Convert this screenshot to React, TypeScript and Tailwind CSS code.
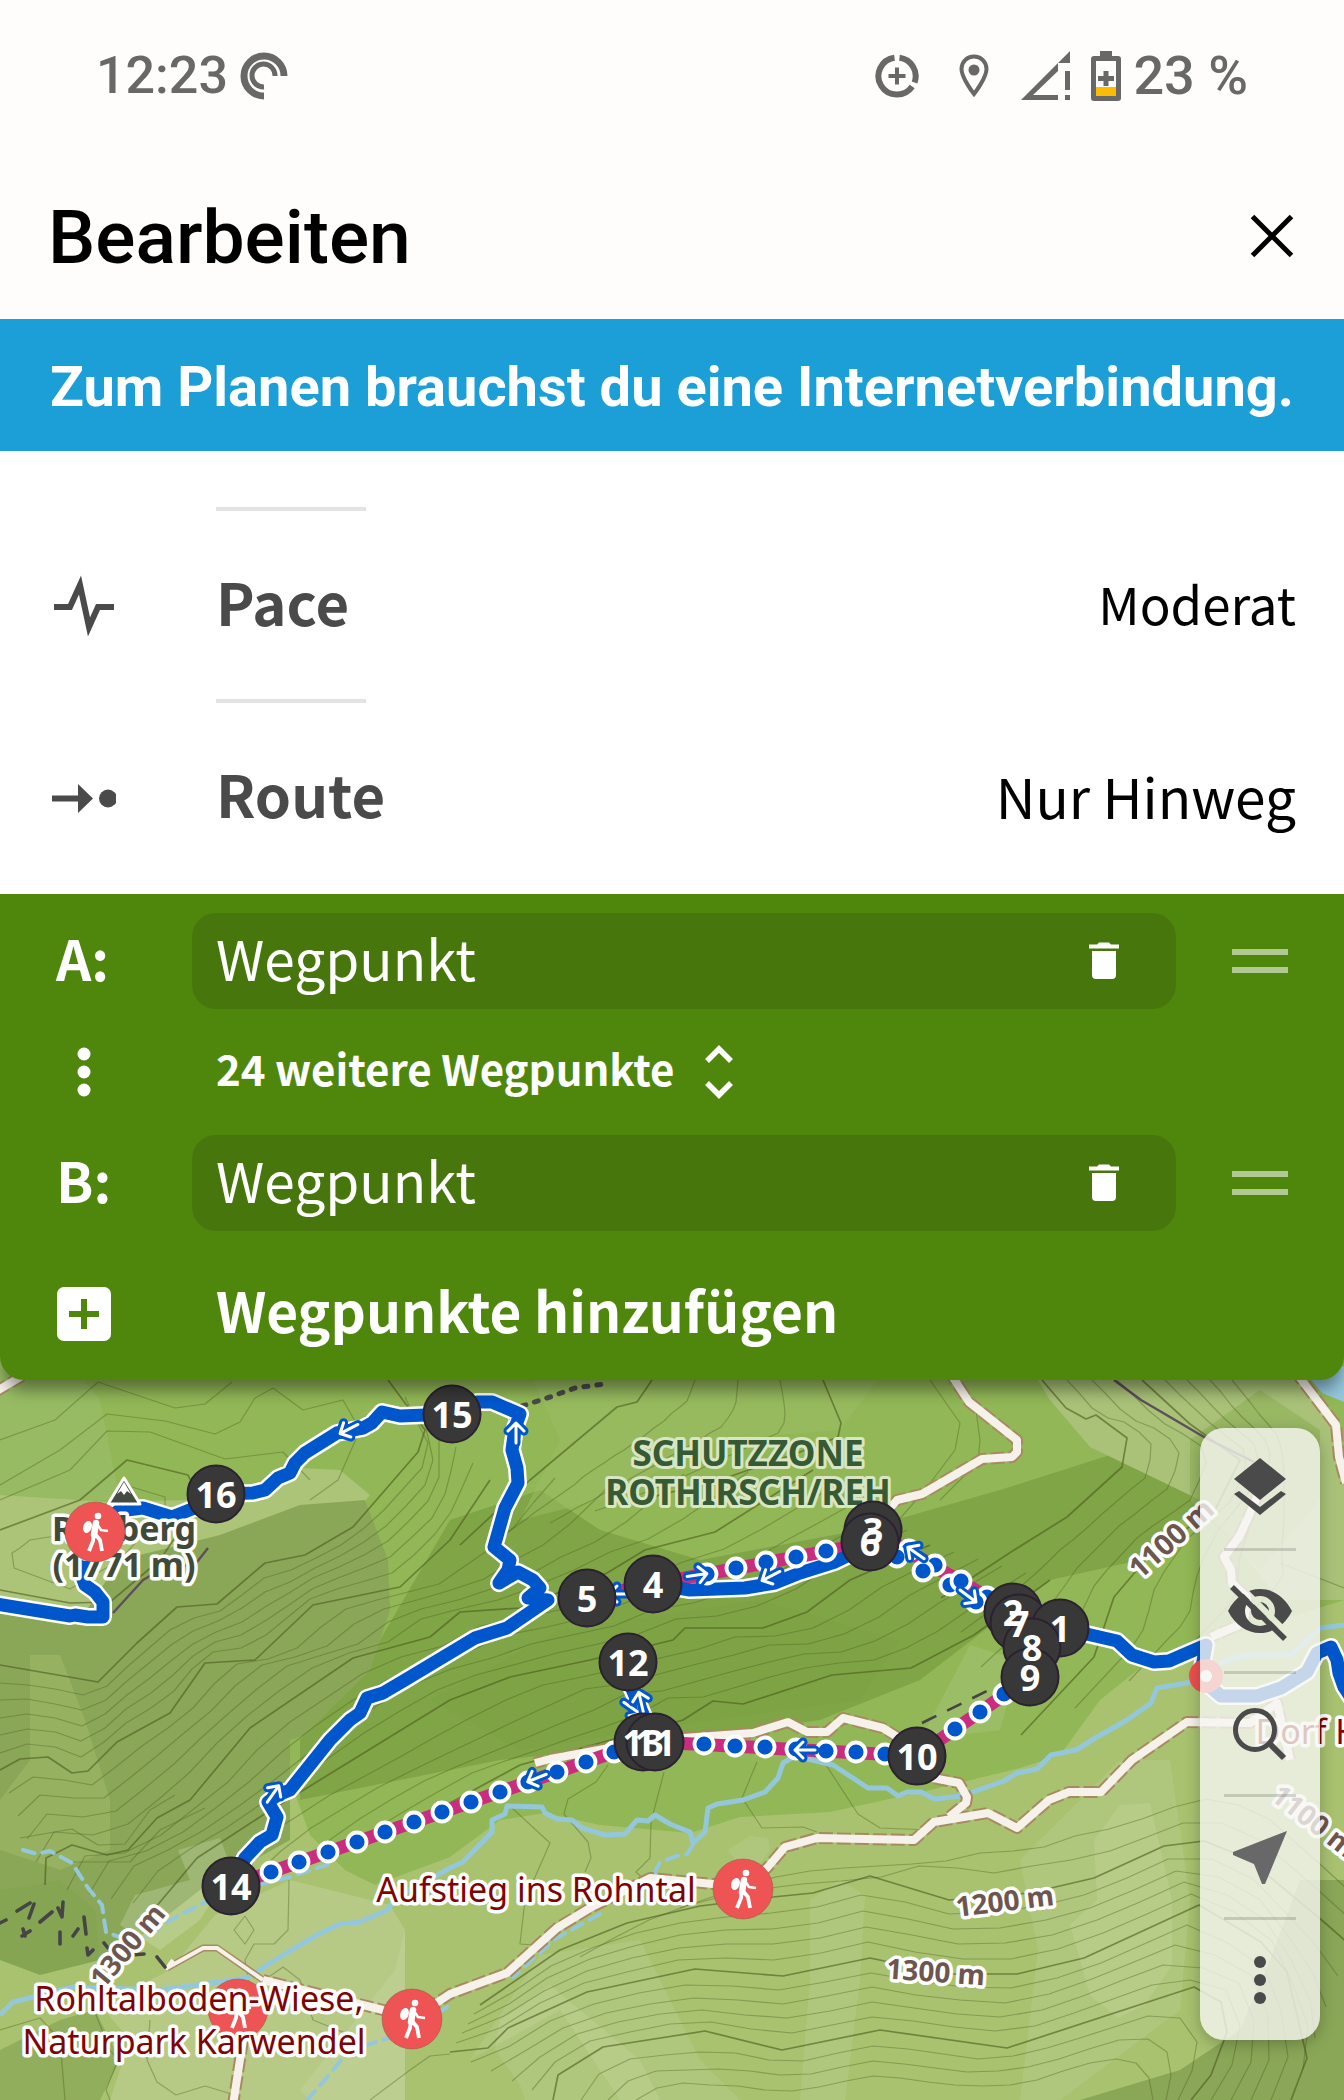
import { useState, type ReactNode } from 'react'

type Point = [number, number]

const BLUE = '#0057cc'
const MAGENTA = '#c92d7e'

const toPath = (pts: Point[]) => 'M' + pts.map((p) => p.join(' ')).join('L')

function resample(pts: Point[], count: number): Point[] {
  const lengths = [0]
  for (let i = 1; i < pts.length; i++) {
    lengths.push(lengths[i - 1] + Math.hypot(pts[i][0] - pts[i - 1][0], pts[i][1] - pts[i - 1][1]))
  }
  const total = lengths[lengths.length - 1]
  const out: Point[] = []
  for (let k = 0; k < count; k++) {
    const d = (total * k) / (count - 1)
    let i = 1
    while (i < pts.length - 1 && lengths[i] < d) i++
    const t = (d - lengths[i - 1]) / (lengths[i] - lengths[i - 1])
    out.push([
      pts[i - 1][0] + (pts[i][0] - pts[i - 1][0]) * t,
      pts[i - 1][1] + (pts[i][1] - pts[i - 1][1]) * t,
    ])
  }
  return out
}

// intermediate contour lines between two index contours
function between(a: Point[], b: Point[], n: number): Point[][] {
  const ra = resample(a, 22)
  const rb = resample(b, 22)
  return Array.from({ length: n }, (_, k) => {
    const t = (k + 1) / (n + 1)
    return ra.map((p, i): Point => [
      Math.round(p[0] + (rb[i][0] - p[0]) * t),
      Math.round(p[1] + (rb[i][1] - p[1]) * t),
    ])
  })
}

const west1: Point[] = [[0, 1665], [98, 1682], [137, 1643], [177, 1607], [217, 1604], [265, 1563], [305, 1555], [353, 1527], [418, 1452], [425, 1430], [388, 1380]]
const west2: Point[] = [[0, 1770], [20, 1759], [48, 1757], [72, 1773], [88, 1771], [117, 1742], [170, 1713], [205, 1663], [255, 1660], [313, 1605], [400, 1587], [450, 1540], [490, 1480]]
const west3: Point[] = [[45, 1885], [46, 1858], [72, 1845], [107, 1855], [128, 1850], [157, 1818], [190, 1800], [250, 1728], [353, 1658], [430, 1637], [460, 1612], [520, 1608], [607, 1573], [645, 1550], [715, 1532], [813, 1470]]
const west4: Point[] = [[155, 1908], [197, 1858], [263, 1815], [393, 1735], [450, 1700], [510, 1677], [590, 1660], [673, 1640], [685, 1628], [763, 1628], [807, 1612], [850, 1580], [930, 1545]]
const mid1: Point[] = [[400, 1830], [520, 1765], [683, 1720], [713, 1701], [743, 1704], [832, 1675], [911, 1668], [974, 1635], [1050, 1580]]
const north0: Point[] = [[0, 1530], [80, 1500], [127, 1460], [188, 1475], [200, 1500], [160, 1560], [110, 1602], [70, 1603], [0, 1590]]
const north1: Point[] = [[460, 1545], [530, 1480], [617, 1407], [637, 1402], [652, 1380]]
const north2: Point[] = [[640, 1500], [720, 1480], [800, 1452], [838, 1437], [841, 1423], [823, 1380]]
const east1: Point[] = [[941, 1598], [1011, 1552], [1067, 1517], [1122, 1467], [1127, 1438], [1096, 1415], [1086, 1419], [1066, 1408], [1042, 1380]]
const east2: Point[] = [[1021, 1735], [1094, 1657], [1114, 1597], [1154, 1550], [1215, 1510], [1240, 1460], [1190, 1424], [1142, 1380]]
const east3: Point[] = [[1290, 1600], [1330, 1560], [1318, 1500], [1288, 1430], [1255, 1380]]
const south0: Point[] = [[480, 2005], [560, 1950], [627, 1923], [700, 1906], [773, 1897], [813, 1893], [870, 1876], [949, 1900], [1030, 1893], [1094, 1878], [1164, 1846], [1204, 1841], [1247, 1858], [1324, 1922], [1350, 1945]]
const south1: Point[] = [[450, 2052], [488, 2048], [508, 2028], [587, 1992], [695, 1969], [783, 1976], [870, 1958], [947, 1974], [1017, 1974], [1084, 1958], [1199, 1905], [1261, 1942], [1287, 1972], [1307, 2058], [1291, 2100]]
const south2: Point[] = [[553, 2100], [558, 2075], [603, 2047], [705, 2031], [782, 2050], [880, 2030], [1007, 2048], [1194, 1987], [1221, 2002], [1227, 2032], [1211, 2075], [1191, 2100]]
const south3: Point[] = [[663, 2100], [695, 2092], [790, 2110], [870, 2090], [1000, 2105], [1110, 2072], [1135, 2085], [1140, 2100]]
const southTop: Point[] = [[780, 1860], [880, 1846], [1000, 1848], [1080, 1832], [1110, 1808], [1170, 1790], [1220, 1770], [1280, 1800], [1344, 1860]]

const INDEX_CONTOURS = [north0, west1, west2, west3, west4, mid1, north1, north2, east1, east2, south0, south1, south2]

const THIN_CONTOURS: Point[][] = [
  ...between(west1, west2, 5),
  ...between(west2, west3, 4),
  ...between(west3, west4, 4),
  ...between(west4, mid1, 4),
  ...between(north1, north2, 3),
  ...between(east1, east2, 3),
  ...between(east2, east3, 4),
  ...between(southTop, south0, 2),
  ...between(south0, south1, 4),
  ...between(south1, south2, 4),
  ...between(south2, south3, 3),
  [[20, 1548], [30, 1540], [62, 1535], [100, 1510], [125, 1485], [165, 1497], [165, 1510], [120, 1560], [70, 1589], [14, 1568], [12, 1553], [20, 1548]],
  [[0, 1485], [60, 1450], [107, 1414], [165, 1421], [215, 1434], [240, 1422], [255, 1398], [273, 1388], [303, 1410], [343, 1400], [360, 1430], [338, 1480], [310, 1500]],
  [[0, 1500], [70, 1470], [107, 1431], [150, 1432], [225, 1459], [283, 1452], [310, 1480]],
  [[0, 1440], [55, 1420], [98, 1382], [175, 1408], [205, 1404], [232, 1382]],
  [[20, 1838], [72, 1829], [98, 1845], [125, 1844], [150, 1810], [175, 1795]],
  [[72, 1862], [130, 1862], [160, 1830], [205, 1808]],
  [[245, 1916], [254, 1930], [245, 1944], [234, 1930], [245, 1916]],
  [[289, 1880], [288, 1930], [274, 1944], [254, 1944], [245, 1960], [250, 1990], [283, 1967], [300, 1980], [313, 2020], [350, 2035]],
  [[150, 2020], [147, 2060], [157, 2082], [176, 2095], [205, 2086], [235, 2095]],
  [[0, 2030], [40, 2018], [60, 2040], [65, 2100]],
  [[90, 2000], [110, 2050], [118, 2060], [106, 2090], [110, 2100]],
  [[370, 2100], [410, 2070], [430, 2056], [450, 2054]],
  [[512, 1808], [550, 1843], [525, 1900], [520, 1944], [548, 1946]],
  [[608, 1765], [596, 1782], [568, 1799], [564, 1814], [588, 1842], [591, 1858], [585, 1872]],
  [[664, 1772], [651, 1822], [650, 1858], [636, 1872], [650, 1885]],
  [[757, 1762], [742, 1798], [762, 1828], [803, 1827], [817, 1832]],
  [[826, 1765], [858, 1814], [880, 1828], [930, 1830]],
  [[1280, 1563], [1344, 1588]],
  [[930, 1380], [960, 1423], [955, 1450], [925, 1490], [890, 1530]],
  [[976, 1410], [980, 1440], [978, 1462], [940, 1500]],
]

const ROADS = [
  'M948 1370L969 1402L1017 1440L1017 1452L1012 1457L982 1459L922 1494L897 1500L880 1520',
  'M1294 1370L1336 1425L1339 1457L1346 1483',
  'M1260 1490L1247 1520L1239 1537L1224 1557L1231 1570L1232 1583L1247 1597L1244 1623L1211 1637',
  'M1290 1760L1277 1703L1250 1723L1187 1722L1132 1760L1101 1792L1069 1792L1049 1800L1017 1828L988 1813L934 1822L914 1840L817 1838L785 1847L767 1868L743 1888L713 1884L650 1878L590 1908L557 1928L507 1973L450 1994L412 2019L383 2010L263 1980',
  'M243 2040L233 2105',
  'M917 1775L959 1783L967 1797L966 1803L949 1817',
  'M683 1738L753 1733L788 1722L807 1732L827 1732L843 1718L883 1728L910 1745',
  'M615 1747L550 1759L535 1763',
  'M-5 1392L22 1376',
]

const STREAMS = [
  'M0 2015L13 2002L73 1987L160 1990L247 1978L283 1955L317 1935L340 1924L360 1922L387 1910L400 1895L450 1868L463 1862L492 1832L492 1820L505 1814L507 1806L542 1807L545 1813L557 1819L572 1820L582 1828L605 1835L625 1834L637 1820L648 1821L655 1815L670 1824L690 1832L693 1843L705 1832L708 1808L717 1804L743 1800L765 1792L778 1778L783 1763L795 1756L833 1765L868 1788L887 1788L898 1796L907 1792L921 1792L934 1799L961 1796L1004 1781L1017 1773L1037 1769L1051 1755L1076 1750L1097 1737L1127 1720L1151 1703L1157 1688L1187 1683L1227 1660L1247 1655L1291 1655L1321 1628L1344 1625',
]

const DRY_STREAMS = [
  'M23 1850L37 1854L50 1851L72 1863L88 1888L102 1905L106 1932L133 1942L153 1933L167 1922L203 1903L250 1887L290 1877L335 1862',
  'M693 1845L687 1854L677 1856L660 1862L652 1878',
  'M600 1914L555 1939L513 1977',
  'M447 2007L412 2030L367 2045L343 2058L323 2082L307 2100',
]

const ROUTES = [
  'M-10 1603L70 1616L75 1615L88 1617L103 1617L103 1602L95 1592L85 1585L82 1577L88 1557L95 1532L118 1511L143 1508L172 1517L197 1507L216 1494L253 1493L265 1490L278 1478L290 1473L295 1463L305 1453L337 1433L363 1428L372 1423L382 1412L400 1416L452 1414L477 1402L492 1402L520 1414L515 1428L512 1450L517 1468L518 1483L505 1508L494 1547L510 1560L508 1570L499 1583L518 1572L533 1580L540 1588L528 1598L548 1600L507 1628L475 1638L450 1653L405 1680L383 1693L367 1698L360 1713L350 1720L330 1740L290 1790L278 1795L268 1802L277 1817L272 1835L260 1842L245 1858L231 1886',
  'M653 1584L690 1590L745 1588L775 1583L800 1573L835 1562L870 1545',
  'M1060 1628L1091 1635L1117 1641L1132 1655L1154 1662L1169 1661L1206 1645L1202 1667L1206 1683L1221 1696L1257 1696L1281 1688L1307 1672L1317 1653L1331 1647L1337 1660L1339 1673L1344 1687L1354 1702',
  'M628 1680L650 1730',
]

const DIRECT_LINES = [
  'M231 1886L643 1742',
  'M655 1742L917 1756',
  'M925 1750L1030 1677',
  'M653 1584L870 1543',
  'M880 1535L1013 1612',
  'M587 1598L653 1584',
]

const DOTS: Point[] = [
  [271, 1872], [299, 1862], [328, 1852], [357, 1842], [385, 1832], [414, 1822], [442, 1812], [471, 1802], [500, 1792], [528, 1782], [557, 1772], [586, 1762], [614, 1752],
  [704, 1744], [735, 1746], [765, 1747], [796, 1749], [826, 1751], [856, 1752], [885, 1754],
  [955, 1729], [980, 1712], [1004, 1694],
  [707, 1574], [736, 1568], [766, 1562], [796, 1557], [826, 1551],
  [909, 1550], [897, 1557], [935, 1565], [923, 1571], [950, 1585], [961, 1581], [987, 1597], [976, 1602],
]

// x, y, heading in degrees
const ARROWS: [number, number, number][] = [
  [349, 1429, 153], [516, 1433, -90], [697, 1575, -8], [771, 1576, 153], [916, 1553, -145],
  [968, 1596, 37], [537, 1778, 158], [805, 1750, 180], [273, 1794, -55], [619, 1594, 180],
  [632, 1708, 35], [641, 1702, -103],
]

const WAYPOINTS: [string, number, number][] = [
  ['16', 216, 1494], ['15', 452, 1414], ['5', 587, 1598], ['4', 653, 1584], ['12', 628, 1662],
  ['3', 873, 1530], ['6', 870, 1542], ['2', 1013, 1612], ['7', 1019, 1623], ['1', 1060, 1628],
  ['8', 1032, 1647], ['9', 1030, 1677], ['10', 917, 1756], ['13', 643, 1742], ['11', 655, 1742], ['14', 231, 1886],
]

function Hiker({ x, y }: { x: number; y: number }) {
  return (
    <g transform={`translate(${x} ${y})`}>
      <circle r="30" fill="#ee5454" stroke="#8c5a48" strokeOpacity="0.5" />
      <circle cx="3" cy="-16" r="3.3" fill="#fff" />
      <ellipse cx="-7.5" cy="-5" rx="4.2" ry="6.2" transform="rotate(18 -7.5 -5)" fill="#fff" />
      <g fill="none" stroke="#fff" strokeLinejoin="round">
        <path d="M1 -9L-1 3" strokeWidth="6.5" strokeLinecap="round" />
        <path d="M2 -8L6 -2L13 -1" strokeWidth="2.6" />
        <path d="M-1 2L-2 9L-6 19M0 2L5 8L7 19" strokeWidth="3.8" />
      </g>
    </g>
  )
}

function MapLabel({ x, y, size = 28, rotate = 0, fill = '#6d5650', weight = 700, children }: {
  x: number
  y: number
  size?: number
  rotate?: number
  fill?: string
  weight?: number
  children: ReactNode
}) {
  return (
    <text
      x={x}
      y={y}
      transform={`rotate(${rotate} ${x} ${y})`}
      textAnchor="middle"
      fontSize={size}
      fontWeight={weight}
      fill={fill}
      stroke="#fff"
      strokeWidth="7"
      strokeLinejoin="round"
      paintOrder="stroke"
    >
      {children}
    </text>
  )
}

function TrailMap() {
  return (
    <svg
      viewBox="0 1350 1344 750"
      className="block w-full font-['Noto_Sans',sans-serif]"
      role="img"
      aria-label="Karte"
    >
      <rect y="1350" width="1344" height="750" fill="#a8c270" />

      {/* land cover and relief */}
      <path fill="#92b756" d="M0 1350H1344V1600L1280 1620L1150 1660L1100 1700L1060 1755L1020 1768L930 1790L830 1812L740 1817L690 1833L600 1825L545 1813L500 1820L450 1857L375 1885L345 1870L310 1835L290 1780L0 1780Z" />
      <path fill="#80a546" d="M300 1740L380 1640L450 1520L540 1490L600 1530L700 1560L860 1530L1000 1490L1110 1455L1200 1500L1140 1560L1050 1580L920 1680L820 1720L640 1745L500 1760L300 1800Z" />
      <path fill="#7ca143" fillOpacity="0.6" d="M430 1700L560 1630L760 1600L900 1640L860 1700L680 1725L520 1750Z" />
      <path fill="#9cbd66" d="M520 1350H900L840 1430L720 1440L600 1500L520 1520L560 1440Z" opacity="0.5" />
      <path fill="#9abc6a" d="M0 1350H60L100 1400L120 1500L0 1500Z" opacity="0.7" />
      <path fill="#abc477" d="M0 1495L110 1502L190 1500L270 1480L300 1468L340 1470L370 1495L350 1520L200 1560L120 1620L0 1600Z" />
      <path fill="#8aa757" d="M120 1560L220 1535L300 1505L365 1500L388 1560L390 1610L370 1670L305 1735L290 1740V1840L200 1890L110 1960L0 1960V1610L80 1620Z" />
      <path fill="#98b463" d="M30 1655L60 1655L85 1720L110 1800V1850L60 1870L0 1850V1800L30 1760Z" opacity="0.8" />
      <path fill="#86a552" d="M0 1890L60 1880L95 1910L100 1960L40 1975L0 1960Z" />
      <path fill="#b6ca85" d="M215 1915L290 1880L390 1905L405 1930V2100H110L130 2040L100 2005L170 1970Z" />
      <path fill="#e8f2e0" fillOpacity="0.22" d="M178 1850L220 1838L232 1870L200 1920L160 1950L120 1925L135 1895L190 1880Z" />
      <path fill="#89a956" d="M0 2050L60 2020L95 2010L120 2060L100 2100H0Z" opacity="0.8" />
      <path fill="#a9c278" d="M1020 1350H1290L1344 1450V1600H1280L1200 1500L1090 1447L1050 1400Z" />
      <path fill="#8fb157" d="M1190 1440L1260 1390L1320 1430V1500L1260 1570L1190 1500Z" opacity="0.6" />
      <path fill="#8aa757" d="M1344 1880L1300 1880L1270 1960L1240 2030L1180 2070L1080 2100H1344Z" />
      <g fill="#fff" fillOpacity="0.09">
        <path d="M500 2020L550 1985L640 2060L660 2100H525L520 2085L495 2050Z" />
        <path d="M470 2060L540 1955L640 1940L700 2060L740 2100H620L560 2010Z" />
        <path d="M810 1900L840 1880L865 1895L860 1980L845 2100H800L810 1980Z" />
        <path d="M1020 1860L1120 1760L1170 1760L1190 1900L1180 2010L1060 2100H1020L1038 1950Z" />
        <path d="M1094 1840L1120 1805L1150 1803L1172 1900L1172 1965L1145 2005L1118 2018L1090 1995L1070 1925L1097 1900Z" />
        <path d="M920 1740L970 1645L1020 1660L1000 1730Z" />
        <path d="M728 1850L750 1836L768 1838L770 1850L755 1870L735 1860Z" />
        <path d="M395 1970L405 1930V2100H310L300 2090Z" />
      </g>
      <path fill="#94c6dc" d="M1308 1376L1344 1366V1402L1322 1393Z" />

      <g fill="none" stroke="#4d5c1f" strokeLinejoin="round">
        <g strokeWidth="1.2" strokeOpacity="0.38">
          {THIN_CONTOURS.map((c, i) => <path key={i} d={toPath(c)} />)}
        </g>
        <g strokeWidth="1.7" strokeOpacity="0.62">
          {INDEX_CONTOURS.map((c, i) => <path key={i} d={toPath(c)} />)}
        </g>
      </g>

      <g fill="none" stroke="#95c7da" strokeWidth="5" strokeLinejoin="round">
        {STREAMS.map((d) => <path key={d} d={d} />)}
        <g strokeDasharray="12 8" strokeLinecap="round" strokeWidth="4">
          {DRY_STREAMS.map((d) => <path key={d} d={d} />)}
        </g>
      </g>

      <g fill="none" strokeLinejoin="round">
        <g stroke="#a88a60" strokeWidth="12" strokeDasharray="14 4">
          {ROADS.map((d) => <path key={d} d={d} />)}
        </g>
        <path d="M263 1980L217 1948H203L167 1968" stroke="#a88a60" strokeWidth="7" />
        <path d="M263 1980L217 1948H203L167 1968L173 1960" stroke="#f6f1ea" strokeWidth="4" />
        <g stroke="#f6f1ea" strokeWidth="8">
          {ROADS.map((d) => <path key={d} d={d} />)}
        </g>
        <path d="M1114 1380L1141 1400L1204 1437L1254 1462M113 1613L143 1580L150 1576L197 1562L208 1548" stroke="#5e4f5c" strokeWidth="2.4" />
        <path d="M522 1406L550 1397L575 1388L604 1384" stroke="#4a4a4a" strokeWidth="5" strokeDasharray="4 9" strokeLinecap="round" />
        <path d="M922 1723L989 1690" stroke="#444" strokeWidth="2.6" strokeDasharray="16 12" />
        <path
          d="M0 1923L6 1920M17 1911L30 1903M34 1904L29 1918M40 1922L52 1912M63 1902L62 1917L58 1908M60 1932V1944M78 1929L73 1936M84 1917L86 1934M22 1936L30 1931M23 1929L25 1936M87 1948L88 1955L93 1950M104 1943L108 1948M131 1955L144 1954M157 1957L165 1967"
          stroke="#454545"
          strokeWidth="3.6"
          strokeLinecap="round"
        />
      </g>

      <text
        textAnchor="middle"
        fontSize="35"
        fontWeight="700"
        fill="#355a34"
        stroke="#d9e6c4"
        strokeWidth="6"
        strokeLinejoin="round"
        paintOrder="stroke"
      >
        <tspan x="748" y="1466">SCHUTZZONE</tspan>
        <tspan x="748" y="1505">ROTHIRSCH/REH</tspan>
      </text>

      <g fill="none" strokeLinejoin="round" strokeLinecap="round">
        <g stroke="#fff" strokeWidth="18">
          {ROUTES.map((d) => <path key={d} d={d} />)}
        </g>
        <g stroke={MAGENTA} strokeWidth="13">
          {DIRECT_LINES.map((d) => <path key={d} d={d} />)}
        </g>
        <g stroke={BLUE} strokeWidth="13">
          {ROUTES.map((d) => <path key={d} d={d} />)}
        </g>
      </g>
      {DOTS.map(([x, y], i) => (
        <circle key={i} cx={x} cy={y} r="9.5" fill={BLUE} stroke="#fff" strokeWidth="3.8" />
      ))}
      {ARROWS.map(([x, y, angle], i) => (
        <g key={i} transform={`translate(${x} ${y}) rotate(${angle})`} fill="none" strokeLinejoin="round" strokeLinecap="round">
          <path d="M-10 0H10M2 -8L10 0L2 8" stroke={BLUE} strokeWidth="9" />
          <path d="M-10 0H10M2 -8L10 0L2 8" stroke="#fff" strokeWidth="3" />
        </g>
      ))}

      <MapLabel x={1178} y={1546} size={29} rotate={-42}>1100 m</MapLabel>
      <MapLabel x={1006} y={1911} rotate={-7}>1200 m</MapLabel>
      <MapLabel x={935} y={1982} rotate={4}>1300 m</MapLabel>
      <MapLabel x={135} y={1952} rotate={-50}>1300 m</MapLabel>
      <MapLabel x={1308} y={1829} rotate={38}>1100 m</MapLabel>

      <path d="M124 1478L140 1504H108Z" fill="#434b43" stroke="#fff" strokeWidth="3" strokeLinejoin="round" />
      <path d="M124 1482L131 1494L127 1491L124 1495L121 1491L117 1494Z" fill="#fff" />
      <MapLabel x={124} y={1541} size={34} fill="#3f4a3a">Ronberg</MapLabel>
      <MapLabel x={124} y={1577} size={34} fill="#3f4a3a">(1771 m)</MapLabel>

      <Hiker x={95} y={1532} />
      <Hiker x={238} y={2009} />
      <Hiker x={743} y={1889} />
      <Hiker x={412} y={2019} />
      <circle cx="1206" cy="1676" r="17" fill="#ee5050" />
      <circle cx="1206" cy="1676" r="6" fill="#fff" />

      <MapLabel x={536} y={1902} size={34} weight={400} fill="#7d0505">Aufstieg ins Rohntal</MapLabel>
      <MapLabel x={199} y={2011} size={34} weight={400} fill="#7d0505">Rohltalboden-Wiese,</MapLabel>
      <MapLabel x={194} y={2054} size={34} weight={400} fill="#7d0505">Naturpark Karwendel</MapLabel>
      <MapLabel x={1308} y={1744} size={34} weight={400} fill="#7d0505">Dorf H</MapLabel>

      {WAYPOINTS.map(([label, x, y]) => (
        <circle key={label} cx={x} cy={y} r="28.5" fill="#383838" stroke="#2b2130" strokeWidth="2" />
      ))}
      <g fontSize="36" fontWeight="700" fill="#fff" textAnchor="middle">
        {WAYPOINTS.map(([label, x, y]) => <text key={label} x={x} y={y + 14}>{label}</text>)}
      </g>
    </svg>
  )
}

const MAP_TOOLS: { label: string; icon: ReactNode }[] = [
  {
    label: 'Ebenen',
    icon: (
      <g fill="#4a4a4a">
        <path d="M36 6L62 27L36 48L10 27Z" />
        <path d="M10 42L15 39L36 55L57 39L62 42L36 63Z" />
      </g>
    ),
  },
  {
    label: 'Ausblenden',
    icon: (
      <g>
        <mask id="eye-cut">
          <rect width="72" height="72" fill="#fff" />
          <path d="M12 7L66 61" stroke="#000" strokeWidth="6" />
        </mask>
        <path
          mask="url(#eye-cut)"
          fill="#4a4a4a"
          fillRule="evenodd"
          d="M4 36C11 22 23 14 36 14S61 22 68 36C61 50 49 58 36 58S11 50 4 36ZM36 21A15 15 0 1 0 36 51A15 15 0 1 0 36 21ZM36 27A9 9 0 1 1 36 45A9 9 0 1 1 36 27Z"
        />
        <path d="M8 12L61 64" stroke="#4a4a4a" strokeWidth="5.5" />
      </g>
    ),
  },
  {
    label: 'Suchen',
    icon: (
      <g fill="none" stroke="#4a4a4a">
        <circle cx="31" cy="32" r="19.5" strokeWidth="5" />
        <path d="M45 45L60 60" strokeWidth="6" />
      </g>
    ),
  },
  {
    label: 'Standort',
    icon: <path d="M63 10L9 31V34L30 43L38 63H41Z" fill="#686868" />,
  },
  {
    label: 'Mehr',
    icon: (
      <g fill="#4a4a4a">
        <circle cx="36" cy="18" r="6" />
        <circle cx="36" cy="36" r="6" />
        <circle cx="36" cy="54" r="6" />
      </g>
    ),
  },
]

function MapToolbar() {
  return (
    <div className="absolute top-[78px] right-6 flex w-[120px] flex-col items-center rounded-[24px] bg-[#f6f6f2]/80 shadow-[0_4px_16px_rgba(0,0,0,0.25)]">
      {MAP_TOOLS.map((tool, i) => (
        <div key={tool.label} className="flex w-full flex-col items-center">
          {i > 0 && <div className="h-[3px] w-[72px] bg-black/15" />}
          <button type="button" aria-label={tool.label} className="flex h-[120px] w-full items-center justify-center">
            <svg viewBox="0 0 72 72" className="size-[72px]">{tool.icon}</svg>
          </button>
        </div>
      ))}
    </div>
  )
}

function StatusBar() {
  return (
    <div className="flex h-[152px] items-center justify-between pr-24 pl-24 font-['Roboto',sans-serif] text-[52px] leading-none text-[#686866]">
      <div className="flex items-center gap-3">
        <span className="font-medium">12:23</span>
        <svg viewBox="0 0 48 48" className="size-12" fill="none" stroke="#686866">
          <path d="M44 24A20 20 0 1 0 24 44" strokeWidth="7" />
          <path d="M35 24A11.500 11.500 0 1 0 24 35" strokeWidth="5" />
        </svg>
      </div>
      <div className="flex items-center">
        <svg viewBox="0 0 44 44" className="mr-10 size-11" fill="none" stroke="#686866">
          <path d="M24.500 3.700A18.500 18.500 0 0 1 39.500 28.500" strokeWidth="6" />
          <path d="M37.200 32.500A18.500 18.500 0 1 1 19.500 3.700" strokeWidth="6" />
          <path d="M22 13.500V30.500M13.500 22H30.500" strokeWidth="4" />
        </svg>
        <svg viewBox="0 0 30 44" className="mr-8 h-11 w-[30px]">
          <path d="M15 2.500C8 2.500 2.500 8 2.500 15C2.500 24 15 40 15 40S27.500 24 27.500 15C27.500 8 22 2.500 15 2.500Z" fill="none" stroke="#686866" strokeWidth="4" />
          <circle cx="15" cy="16" r="5.500" fill="#686866" />
        </svg>
        <svg viewBox="0 0 50 50" className="mr-5 size-[50px]" fill="#686866">
          <path fillRule="evenodd" d="M0 49L37 12V20L12 44H37V49Z" />
          <path d="M49 0V12H37ZM44 20H49V39H44ZM44 44H49V49H44Z" />
        </svg>
        <svg viewBox="0 0 30 50" className="mr-3 h-[50px] w-[30px]">
          <path d="M9 0H21V5H27Q30 5 30 8V47Q30 50 27 50H3Q0 50 0 47V8Q0 5 3 5H9Z" fill="#686866" />
          <rect x="5" y="10" width="20" height="35" fill="#fefdfb" />
          <rect x="5" y="36" width="20" height="9" fill="#fbbc04" />
          <path d="M15 20V35M7 27.500H23" stroke="#686866" strokeWidth="5" />
        </svg>
        <span className="text-[54px] font-medium">23 %</span>
      </div>
    </div>
  )
}

function SettingRow({ icon, label, value, small }: { icon: ReactNode; label: string; value: string; small?: boolean }) {
  return (
    <div>
      <div className="ml-[216px] h-1 w-[150px] bg-[#e3e3e3]" />
      <button type="button" className="flex h-[188px] w-full items-center pr-12 pl-[52px] text-left">
        <svg viewBox="0 0 64 64" className="size-16">{icon}</svg>
        <span className="ml-[100px] flex-1 pb-2 text-[58px] leading-none font-bold text-[#4a4a4a]">{label}</span>
        <span className={small ? 'pb-1 text-[51px] leading-none' : 'pb-1 text-[55px] leading-none'}>{value}</span>
      </button>
    </div>
  )
}

function WaypointRow({ letter }: { letter: string }) {
  const [name, setName] = useState('Wegpunkt')
  const id = `waypoint-${letter}`

  return (
    <div className="flex h-24 items-center">
      <label htmlFor={id} className="w-48 pb-2 pl-14 text-[55px] leading-none font-bold">{letter}:</label>
      <div className="flex h-full flex-1 items-center rounded-[24px] bg-[#47770c] pr-14 pl-6">
        <input
          id={id}
          value={name}
          onChange={(e) => setName(e.target.value)}
          className="h-full min-w-0 flex-1 bg-transparent pb-2 text-[55px] outline-none"
        />
        <button type="button" aria-label="Löschen">
          <svg viewBox="0 0 32 38" className="h-[38px] w-8" fill="#fff">
            <path d="M1 2.500H9L11 0.500H21L23 2.500H31V6.500H1ZM4 9H28V33Q28 37 24 37H8Q4 37 4 33Z" />
          </svg>
        </button>
      </div>
      <button type="button" aria-label="Verschieben" className="mr-14 ml-14 flex w-14 flex-col gap-3">
        <span className="h-1.5 w-full bg-white/55" />
        <span className="h-1.5 w-full bg-white/55" />
      </button>
    </div>
  )
}

export default function App() {
  return (
    <div className="min-h-screen overflow-hidden bg-white font-['Noto_Sans_CJK_SC',sans-serif] text-black">
      <header className="bg-[#fefdfb]">
        <StatusBar />
        <div className="flex h-[167px] items-center justify-between pr-[50px] pl-12 font-['Roboto',sans-serif]">
          <h1 className="pt-1 text-[75px] leading-none font-medium">Bearbeiten</h1>
          <button type="button" aria-label="Schließen">
            <svg viewBox="0 0 44 44" className="size-11" stroke="#000" strokeWidth="5">
              <path d="M2.500 2.500L41.500 41.500M41.500 2.500L2.500 41.500" />
            </svg>
          </button>
        </div>
      </header>

      <p className="flex h-[132px] items-center justify-center bg-[#1c9ed7] pt-1 font-['Roboto',sans-serif] text-[56px] leading-none font-bold whitespace-nowrap text-white">
        Zum Planen brauchst du eine Internetverbindung.
      </p>

      <section className="pt-14 pb-[3px]">
        <SettingRow
          label="Pace"
          value="Moderat"
          small
          icon={<path d="M2 34H18L28 12L37 54L46 34H62" fill="none" stroke="#4a4a4a" strokeWidth="6" strokeMiterlimit="10" />}
        />
        <SettingRow
          label="Route"
          value="Nur Hinweg"
          icon={
            <g fill="#4a4a4a">
              <path d="M0 30.500H26V19L41 33.500L26 48V36.500H0Z" />
              <circle cx="56" cy="33.500" r="9" />
            </g>
          }
        />
      </section>

      <section className="relative z-10 rounded-b-[24px] bg-[#4f870d] pt-[19px] text-white shadow-[0_14px_16px_-4px_rgba(0,0,0,0.4)]">
        <WaypointRow letter="A" />
        <button type="button" className="flex h-[126px] w-full items-center pl-14 text-left">
          <svg viewBox="0 0 56 56" className="size-14" fill="#fff">
            <circle cx="28" cy="10" r="6.500" />
            <circle cx="28" cy="28" r="6.500" />
            <circle cx="28" cy="46" r="6.500" />
          </svg>
          <span className="ml-[104px] pb-2 text-[42px] leading-none font-bold">24 weitere Wegpunkte</span>
          <svg viewBox="0 0 32 56" className="ml-7 h-14 w-8" fill="none" stroke="#fff" strokeWidth="5.500">
            <path d="M4 17L16 5L28 17M4 39L16 51L28 39" />
          </svg>
        </button>
        <WaypointRow letter="B" />
        <button type="button" className="mt-4 flex h-[133px] w-full items-center pl-14 text-left">
          <svg viewBox="0 0 56 56" className="size-14">
            <rect x="1" y="1" width="54" height="54" rx="7" fill="#fff" />
            <path d="M28 13V43M13 28H43" stroke="#4f870d" strokeWidth="6" />
          </svg>
          <span className="ml-[104px] pb-2 text-[55px] leading-none font-bold">Wegpunkte hinzufügen</span>
        </button>
      </section>

      <section className="relative -mt-[30px]">
        <TrailMap />
        <MapToolbar />
      </section>
    </div>
  )
}
